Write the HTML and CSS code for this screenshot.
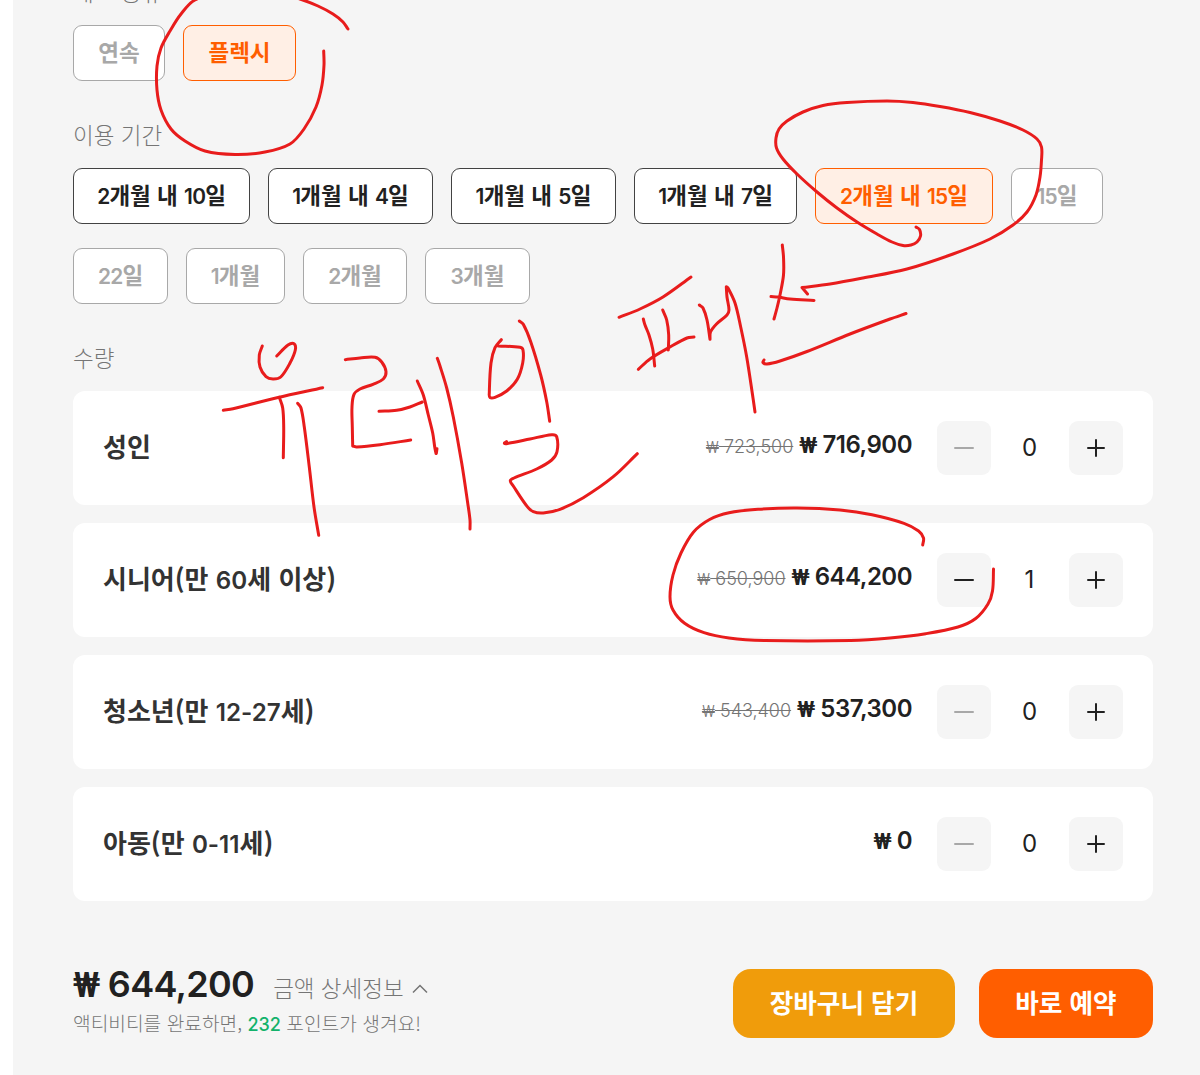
FILE: index.html
```html
<!DOCTYPE html>
<html lang="ko">

<head>
    <meta charset="UTF-8">
    <meta name="viewport" content="width=device-width, initial-scale=1.0">
    <title>유레일 패스</title>
    <link rel="stylesheet" href="styles.css">
</head>

<body>
    <main class="page">
        <section class="option">
            <h3 class="label">패스 종류</h3>
            <div class="chips type">
                <button class="chip disabled">연속</button>
                <button class="chip selected">플렉시</button>
            </div>
        </section>

        <section class="option">
            <h3 class="label">이용 기간</h3>
            <div class="chips period">
                <button class="chip"><b>2</b>개월 내 <b>10</b>일</button>
                <button class="chip"><b>1</b>개월 내 <b>4</b>일</button>
                <button class="chip"><b>1</b>개월 내 <b>5</b>일</button>
                <button class="chip"><b>1</b>개월 내 <b>7</b>일</button>
                <button class="chip selected"><b>2</b>개월 내 <b>15</b>일</button>
                <button class="chip disabled"><b>15</b>일</button>
                <button class="chip disabled"><b>22</b>일</button>
                <button class="chip disabled"><b>1</b>개월</button>
                <button class="chip disabled"><b>2</b>개월</button>
                <button class="chip disabled"><b>3</b>개월</button>
            </div>
        </section>

        <section class="option">
            <h3 class="label">수량</h3>
            <ul class="list">
                <li class="card">
                    <span class="name">성인</span>
                    <del class="before"><i>₩</i> 723,500</del>
                    <strong class="price"><i>₩</i> 716,900</strong>
                    <div class="stepper">
                        <button class="step off"><svg viewBox="0 0 24 24"><path d="M3 12H21" /></svg></button>
                        <span class="count">0</span>
                        <button class="step"><svg viewBox="0 0 24 24"><path d="M4 12H20M12 4V20" /></svg></button>
                    </div>
                </li>
                <li class="card">
                    <span class="name">시니어(만 <b>60</b>세 이상)</span>
                    <del class="before"><i>₩</i> 650,900</del>
                    <strong class="price"><i>₩</i> 644,200</strong>
                    <div class="stepper">
                        <button class="step"><svg viewBox="0 0 24 24"><path d="M3 12H21" /></svg></button>
                        <span class="count">1</span>
                        <button class="step"><svg viewBox="0 0 24 24"><path d="M4 12H20M12 4V20" /></svg></button>
                    </div>
                </li>
                <li class="card">
                    <span class="name">청소년(만 <b>12-27</b>세)</span>
                    <del class="before"><i>₩</i> 543,400</del>
                    <strong class="price"><i>₩</i> 537,300</strong>
                    <div class="stepper">
                        <button class="step off"><svg viewBox="0 0 24 24"><path d="M3 12H21" /></svg></button>
                        <span class="count">0</span>
                        <button class="step"><svg viewBox="0 0 24 24"><path d="M4 12H20M12 4V20" /></svg></button>
                    </div>
                </li>
                <li class="card">
                    <span class="name">아동(만 <b>0-11</b>세)</span>
                    <strong class="price"><i>₩</i> 0</strong>
                    <div class="stepper">
                        <button class="step off"><svg viewBox="0 0 24 24"><path d="M3 12H21" /></svg></button>
                        <span class="count">0</span>
                        <button class="step"><svg viewBox="0 0 24 24"><path d="M4 12H20M12 4V20" /></svg></button>
                    </div>
                </li>
            </ul>
        </section>

        <footer class="footer">
            <div class="summary">
                <div class="total">
                    <strong class="sum"><i>₩</i> 644,200</strong>
                    <span class="detail">금액 상세정보</span>
                    <svg class="arrow" viewBox="0 0 16 10"><path d="M1 8.5L8 1.5L15 8.5" /></svg>
                </div>
                <p class="point">액티비티를 완료하면, <b>232</b> 포인트가 생겨요!</p>
            </div>
            <button class="btn cart">장바구니 담기</button>
            <button class="btn book">바로 예약</button>
        </footer>
    </main>

    <svg class="ink" id="ink" width="1200" height="1075"></svg>

    <script src="ink.js"></script>
</body>

</html>
```

FILE: styles.css
```css
* {
    box-sizing: border-box;
}

body {
    margin: 0;
    height: 1075px;
    overflow: hidden;
    position: relative;
    background: #fff;
    color: #212121;
    font-family: 'Noto Sans CJK KR', sans-serif;
}

button {
    font-family: inherit;
    border: none;
    padding: 0;
}

i {
    font-family: 'Roboto', sans-serif;
    font-size: 0.95em;
    font-style: normal;
}

.page {
    height: 1075px;
    margin-left: 13px;
    padding: 0 47px 0 60px;
    background: #f5f5f5;
    overflow: hidden;
}

.option {
    margin-bottom: 39px;
}

.option:first-child {
    margin-top: -23px;
}

.label {
    height: 32px;
    margin: 0 0 16px;
    font-size: 22.5px;
    font-weight: 300;
    line-height: 29px;
    color: #757575;
}

.chips {
    display: flex;
    flex-wrap: wrap;
    gap: 24px 18px;
}

.chip {
    height: 56px;
    padding-bottom: 5px;
    border: 1px solid #424242;
    border-radius: 9px;
    background: #fff;
    color: #212121;
    font-size: 22.5px;
    font-weight: 700;
    white-space: nowrap;
}

.chip b,
.name b {
    font-family: 'Inter', sans-serif;
    font-size: 0.93em;
    font-weight: 600;
}

.chip b {
    letter-spacing: -0.8px;
}

.chip.disabled {
    border-color: #a8a8a8;
    color: #a8a8a8;
}

.chip.selected {
    border-color: #ff5e00;
    background: #ffefe5;
    color: #ff5e00;
}

.type .chip:nth-child(1) {
    width: 92px;
}

.type .chip:nth-child(2) {
    width: 113px;
}

.period .chip:nth-child(1) {
    width: 177px;
}

.period .chip:nth-child(2),
.period .chip:nth-child(3) {
    width: 165px;
}

.period .chip:nth-child(4) {
    width: 163px;
}

.period .chip:nth-child(5) {
    width: 178px;
}

.period .chip:nth-child(6) {
    width: 92px;
}

.period .chip:nth-child(7) {
    width: 95px;
}

.period .chip:nth-child(8) {
    width: 99px;
}

.period .chip:nth-child(9) {
    width: 104px;
}

.period .chip:nth-child(10) {
    width: 105px;
}

.list {
    display: flex;
    flex-direction: column;
    gap: 18px;
    margin: 0;
    padding: 0;
    list-style: none;
}

.card {
    display: flex;
    align-items: center;
    height: 114px;
    padding: 0 30px;
    border-radius: 12px;
    background: #fff;
}

.name {
    flex: 1;
    padding-bottom: 6px;
    color: #333;
    font-size: 26px;
    font-weight: 700;
}

.before,
.price,
.count,
.sum {
    font-family: 'Inter', 'Noto Sans CJK KR', sans-serif;
    white-space: nowrap;
}

.before {
    margin-right: 6px;
    padding-bottom: 3px;
    color: #757575;
    font-size: 18px;
    font-weight: 300;
}

.price {
    padding-bottom: 7px;
    font-size: 24px;
    font-weight: 600;
    letter-spacing: -0.5px;
}

.stepper {
    display: flex;
    align-items: center;
    margin-left: 25px;
}

.step {
    display: flex;
    align-items: center;
    justify-content: center;
    width: 54px;
    height: 54px;
    border-radius: 9px;
    background: #f5f5f5;
}

.step svg {
    width: 24px;
    height: 24px;
    fill: none;
    stroke: #212121;
    stroke-width: 2;
    stroke-linecap: round;
}

.step.off svg {
    stroke: #a8a8a8;
}

.count {
    width: 78px;
    padding: 0 1px 1px 0;
    font-size: 24px;
    text-align: center;
}

.footer {
    display: flex;
    align-items: flex-start;
    padding-top: 29px;
}

.summary {
    flex: 1;
}

.total {
    display: flex;
    align-items: center;
    height: 32px;
}

.sum {
    padding-bottom: 3px;
    font-size: 36px;
    font-weight: 600;
    letter-spacing: -0.7px;
}

.detail {
    margin: 4px 8px 0 19px;
    color: #757575;
    font-size: 22.5px;
    font-weight: 300;
}

.arrow {
    width: 16px;
    height: 10px;
    margin-top: 7px;
    fill: none;
    stroke: #757575;
    stroke-width: 1.5;
}

.point {
    margin: 8px 0 0;
    color: #757575;
    font-size: 19.2px;
    font-weight: 300;
    line-height: 28px;
}

.point b {
    color: #13b26b;
    font-family: 'Inter', sans-serif;
    font-size: 18px;
    font-weight: 500;
}

.btn {
    height: 69px;
    padding-bottom: 5px;
    border-radius: 18px;
    color: #fff;
    font-size: 25.6px;
    font-weight: 700;
}

.cart {
    width: 222px;
    background: #f09c0b;
}

.book {
    width: 174px;
    margin-left: 24px;
    background: #ff5e00;
}

.ink {
    position: absolute;
    top: 0;
    left: 0;
    fill: none;
    stroke: #e81c1c;
    stroke-width: 3;
    stroke-linecap: round;
    stroke-linejoin: round;
    pointer-events: none;
}
```

FILE: ink.js
```js
// pen strokes: x,y points, "|" is a sharp corner
const strokes = [
    // 플렉시 circle
    '348,29 343,22 333,14 318,6 300,-1 245,-18 195,0 181,14 170,31 161,48 157,66 157,90 161,110 171,129 185,141 205,151 235,154.5 265,152 290,144 304,129 316,107 322,85 324,65 323.7,51',
    // 15일 circle and arrow
    '916,227 919.5,229.5 920.5,236 917,242 911,245 903,245.5 892,242 877,234 857,222 837,208 817,192 797,174 783,159 776.5,148 776,138 779,129 787,121 803,112 823,105.5 847,102.5 887,101 913,102.5 940,106.5 970,112.5 1000,121 1023,130 1037,139 1041.5,147 1041.5,160 1040,177 1036,195 1027,212 1013,225 990,239 953,254 907,269 863,278 830,284 802,287.5 | 807.5,294',
    // 스
    '782.3,245 783.5,257 783.5,275 780,295 777,308 774,319',
    '771,296.5 778,297 790,299 814,300.5',
    '906,313.5 890,319 850,334 807,351.5 780,361 767,364 763,362.5 764,360',
    // 패
    '619,317.3 640,309 663,297 691,277',
    '643.3,319 645,325 649,335 652.7,349 654.7,366',
    '662.7,310 666.7,320 668.7,335 668.3,350',
    '638.3,369.3 650,359 670,347 687,338 694,337',
    '699.3,305 703,308 707,320 710,339.3 | 710.5,332 716.5,324 727,315 729,310 727,297 726.3,286.7 | 728,288 735,303 740.7,327 746.7,357 753,398 755,412',
    // 우
    '262.3,346 259.3,355 260,367 266,376.7 273,379 280.7,377 290,363 295.3,350 294,343.7 288,345 276.7,356',
    '223.3,410.3 233,408.7 277,397.7 322.7,387.7',
    '279.3,397.3 282.7,408 283.7,427 283.3,457.7',
    '297.7,403.3 301,408 304.3,427 309.3,467 314,507 318.7,535.3',
    // 레
    '345.3,359.7 360,358 375,357.3 381.7,362 386,371.7 383.3,379 373,384.3 360,389 354,394.3 352,407 352.3,427 352.7,446 | 356.7,447 380,444.7 410.7,440',
    '379,411.3 396.7,410.3 410,407 422.3,402',
    '417.3,381 423.3,395 428.3,415 432.7,433 436,453.3 437,448.7',
    '437.3,358.3 440,366 446.7,388 453.3,417 461.7,463 467.7,503 470,520 470,529',
    // 일
    '501.3,339.7 495,347.7 491,363 489.3,393 490,397.5 495,397.3 506.7,391 517.3,379.3 522.7,363 523,350 520,347.3 498.3,346',
    '519.3,321 523.3,324.3 530.7,341.7 540.7,375 546.7,401.7 549.7,421.3',
    '506.5,441.5 504.5,443.5 508.3,443.3 530,439 551.7,434.7 556.7,436.7 557,451.7 551.7,460 536.7,469 514,478 510.3,480.7 513.3,486 527.3,506.7 533.3,511.7 543.3,513 560,509.3 583.3,497.7 613.3,476.7 637.3,453.7',
    // 644,200 circle
    '922.7,545 923.5,538 918.6,531 904,523.3 872,514.7 840,510 797,508 758,509.3 729,512.7 709.6,519.5 693.6,532 681,553 673,575 670,596.7 673,610 684.6,623.3 704,632.7 729,638 765,640.5 850.7,640.5 890,638 925.7,633.7 958,627 975.7,618.5 988,604 992.5,591 993.5,569'
]

// smooth curve through all the points of one segment
function curve(pts) {
    let d = ''
    for (let i = 0; i < pts.length - 1; i++) {
        const p0 = pts[i - 1] || pts[i]
        const p1 = pts[i]
        const p2 = pts[i + 1]
        const p3 = pts[i + 2] || p2
        // handles are a third of the segment, so uneven spacing does not overshoot
        const len = Math.hypot(p2[0] - p1[0], p2[1] - p1[1])
        const a = Math.hypot(p2[0] - p0[0], p2[1] - p0[1]) || 1
        const b = Math.hypot(p3[0] - p1[0], p3[1] - p1[1]) || 1
        const c1 = [p1[0] + (p2[0] - p0[0]) / a * len / 3, p1[1] + (p2[1] - p0[1]) / a * len / 3]
        const c2 = [p2[0] - (p3[0] - p1[0]) / b * len / 3, p2[1] - (p3[1] - p1[1]) / b * len / 3]
        d += `C${c1} ${c2} ${p2}`
    }
    return d
}

const ink = document.getElementById('ink')

for (const stroke of strokes) {
    let d = ''
    let last = null
    for (const part of stroke.split(' | ')) {
        const pts = part.split(' ').map(p => p.split(',').map(Number))
        if (last) pts.unshift(last)
        else d = `M${pts[0]}`
        d += curve(pts)
        last = pts[pts.length - 1]
    }
    const path = document.createElementNS('http://www.w3.org/2000/svg', 'path')
    path.setAttribute('d', d)
    ink.appendChild(path)
}
```
